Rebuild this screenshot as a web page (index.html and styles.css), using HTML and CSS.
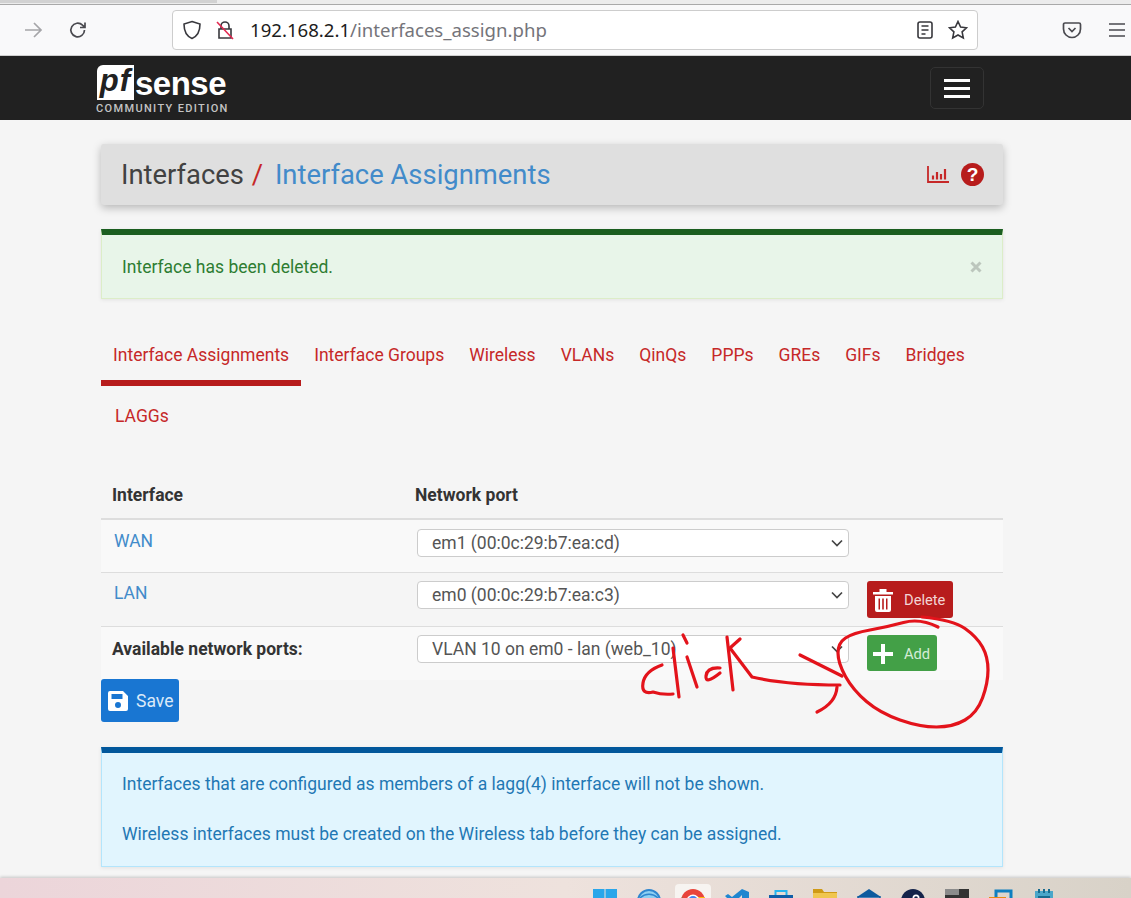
FILE: index.html
```html
<!DOCTYPE html>
<html>
<head>
    <meta charset="utf-8">
    <title>Interface Assignments</title>
    <link rel="stylesheet" href="styles.css">
</head>
<body>
    <div class="tabstrip"><div class="tabstrip-tab"></div></div>

    <div class="toolbar">
        <svg class="tool-icon back" viewBox="0 0 20 20"><path d="M2 10h16M11 3l7 7-7 7"/></svg>
        <svg class="tool-icon reload" viewBox="0 0 20 20"><path d="M16.5 10a6.8 6.8 0 1 1-2-4.8L17 7.500M17 2.500v5h-5"/></svg>
        <div class="urlbar">
            <svg class="url-icon" viewBox="0 0 20 20"><path d="M10 1.500l8 2.500c0 7-2 12-8 14.500C4 16 2 11 2 4z"/></svg>
            <svg class="url-icon lock" viewBox="0 0 20 20"><path d="M6 9V6a4 4 0 0 1 8 0v3M4 9h12v9H4z"/><path class="lock-strike" d="M2 2l16 17"/></svg>
            <div class="url"><span class="url-host">192.168.2.1</span>/interfaces_assign.php</div>
            <svg class="url-icon reader" viewBox="0 0 20 20"><rect x="3" y="2" width="14" height="16" rx="2"/><path d="M6.500 6h7M6.500 10h7M6.500 14h4"/></svg>
            <svg class="url-icon star" viewBox="0 0 20 20"><path d="M10 1.500l2.600 5.600 6 .7-4.500 4.100 1.200 6L10 15l-5.300 2.900 1.200-6-4.500-4.100 6-.7z"/></svg>
        </div>
        <svg class="tool-icon pocket" viewBox="0 0 20 20"><path d="M3 3h14a1.500 1.500 0 0 1 1.500 1.500V9a8.500 8.500 0 0 1-17 0V4.500A1.500 1.500 0 0 1 3 3z"/><path d="M6.500 8l3.500 3.500L13.500 8"/></svg>
        <svg class="tool-icon appmenu" viewBox="0 0 20 20"><path d="M2 4h16M2 10h16M2 16h16"/></svg>
    </div>

    <nav class="navbar">
        <div class="brand">
            <div class="brand-top">
                <div class="brand-pf">pf</div>
                <div class="brand-sense">sense</div>
            </div>
            <div class="brand-sub">COMMUNITY EDITION</div>
        </div>
        <button class="nav-toggle"><span></span><span></span><span></span></button>
    </nav>

    <main class="content">
        <header class="page-header">
            <h1 class="crumbs">
                <span>Interfaces</span>
                <span class="crumb-sep">/</span>
                <a class="crumb-link" href="#">Interface Assignments</a>
            </h1>
            <svg class="head-icon" viewBox="0 0 22 17"><path class="chart-line" d="M1 0v16h21"/><path class="chart-bars" d="M6 13.500v-4M10 13.500V6M14 13.500V8M18 13.500V3"/></svg>
            <svg class="head-icon help" viewBox="0 0 24 24"><circle cx="12" cy="12" r="12"/><text x="12" y="19" text-anchor="middle">?</text></svg>
        </header>

        <div class="alert alert-success">
            <span>Interface has been deleted.</span>
            <svg class="alert-close" viewBox="0 0 12 12"><path d="M1.500 1.500l9 9M10.500 1.500l-9 9"/></svg>
        </div>

        <ul class="tabs">
            <li class="tab active"><a href="#">Interface Assignments</a></li>
            <li class="tab"><a href="#">Interface Groups</a></li>
            <li class="tab"><a href="#">Wireless</a></li>
            <li class="tab"><a href="#">VLANs</a></li>
            <li class="tab"><a href="#">QinQs</a></li>
            <li class="tab"><a href="#">PPPs</a></li>
            <li class="tab"><a href="#">GREs</a></li>
            <li class="tab"><a href="#">GIFs</a></li>
            <li class="tab"><a href="#">Bridges</a></li>
            <li class="tab"><a href="#">LAGGs</a></li>
        </ul>

        <table class="assign-table">
            <colgroup>
                <col class="col-name">
                <col class="col-port">
                <col class="col-action">
            </colgroup>
            <thead>
                <tr>
                    <th>Interface</th>
                    <th>Network port</th>
                    <th></th>
                </tr>
            </thead>
            <tbody>
                <tr class="striped">
                    <td class="name-cell"><a href="#">WAN</a></td>
                    <td>
                        <div class="select-wrap">
                            <select><option>em1 (00:0c:29:b7:ea:cd)</option></select>
                            <svg class="chevron" viewBox="0 0 12 8"><path d="M1 1.500l5 5 5-5"/></svg>
                        </div>
                    </td>
                    <td></td>
                </tr>
                <tr>
                    <td class="name-cell"><a href="#">LAN</a></td>
                    <td>
                        <div class="select-wrap">
                            <select><option>em0 (00:0c:29:b7:ea:c3)</option></select>
                            <svg class="chevron" viewBox="0 0 12 8"><path d="M1 1.500l5 5 5-5"/></svg>
                        </div>
                    </td>
                    <td>
                        <button class="btn btn-delete">
                            <svg class="btn-icon" viewBox="0 0 20 24"><path d="M0 4h20v2.500H0zM6.500 4V1h7v3" class="fill"/><path class="fill" fill-rule="evenodd" d="M2 8h16v14a2 2 0 0 1-2 2H4a2 2 0 0 1-2-2zM5.500 10.500v11h1.500v-11zM9.200 10.500v11h1.600v-11zM13 10.500v11h1.500v-11z"/></svg>
                            Delete
                        </button>
                    </td>
                </tr>
                <tr class="striped">
                    <td class="name-cell"><strong>Available network ports:</strong></td>
                    <td>
                        <div class="select-wrap">
                            <select><option>VLAN 10 on em0 - lan (web_10)</option></select>
                            <svg class="chevron" viewBox="0 0 12 8"><path d="M1 1.500l5 5 5-5"/></svg>
                        </div>
                    </td>
                    <td>
                        <button class="btn btn-add">
                            <svg class="btn-icon" viewBox="0 0 20 20"><path class="fill" d="M8 0h4v8h8v4h-8v8H8v-8H0V8h8z"/></svg>
                            Add
                        </button>
                    </td>
                </tr>
            </tbody>
        </table>

        <button class="btn btn-save">
            <svg class="btn-icon" viewBox="0 0 20 20"><path class="fill" fill-rule="evenodd" d="M2 0h13l5 5v13a2 2 0 0 1-2 2H2a2 2 0 0 1-2-2V2a2 2 0 0 1 2-2zM3.500 3v5h11V3zM10 11a3 3 0 1 0 0 6 3 3 0 0 0 0-6z"/></svg>
            Save
        </button>

        <div class="alert alert-info">
            <p>Interfaces that are configured as members of a lagg(4) interface will not be shown.</p>
            <p>Wireless interfaces must be created on the Wireless tab before they can be assigned.</p>
        </div>
    </main>

    <div class="taskbar">
        <svg class="task-icon" viewBox="0 0 24 24"><path fill="#2aa6ea" d="M0 0h11.500v11.500H0zM12.500 0H24v11.500H12.500zM0 12.500h11.500V24H0zM12.500 12.500H24V24H12.500z"/></svg>
        <svg class="task-icon" viewBox="0 0 24 24"><circle cx="12" cy="12" r="11" fill="#8fd0f2" stroke="#2f86cf" stroke-width="2"/><path d="M3 9c5-5 13-5 18 0" fill="none" stroke="#2f86cf" stroke-width="1.500"/></svg>
        <div class="task-active">
            <svg class="task-icon" viewBox="0 0 24 24"><circle cx="12" cy="12" r="12" fill="#e8453c"/><path d="M1 8a12 12 0 0 0 11 16z" fill="#34a853"/><path d="M23.500 8H12l-2 16a12 12 0 0 0 13.500-16z" fill="#fbbc05"/><circle cx="12" cy="12" r="6.500" fill="#fff"/><circle cx="12" cy="12" r="5" fill="#4285f4"/></svg>
        </div>
        <svg class="task-icon" viewBox="0 0 24 24"><path fill="#1f86d0" d="M17 0l7 3v18l-7 3L7 14l-4 3-3-2 5-3-5-5 3-2 4 3zM17 6l-6 6 6 6z"/></svg>
        <svg class="task-icon" viewBox="0 0 24 24"><path fill="none" stroke="#26b4ee" stroke-width="2" d="M6.500 6V2h11v4"/><path fill="#0f5ea8" d="M0 6h24v18H0z"/></svg>
        <svg class="task-icon" viewBox="0 0 24 24"><path fill="#cf9a16" d="M0 0h9l2 3h13v6H0z"/><path fill="#f0c64f" d="M0 4h24v20H0z"/></svg>
        <svg class="task-icon" viewBox="0 0 24 24"><path fill="#0d5a9e" d="M12 0l12 8H0z"/><path fill="#fff" stroke="#0d5a9e" stroke-width="1.500" d="M1 8h22v16H1z"/></svg>
        <svg class="task-icon" viewBox="0 0 24 24"><circle cx="12" cy="12" r="12" fill="#14234a"/><circle cx="15" cy="9" r="3.500" fill="#fff"/><circle cx="15" cy="9" r="1.800" fill="#14234a"/></svg>
        <svg class="task-icon" viewBox="0 0 24 24"><path fill="#8b8b8b" d="M0 0h24v6H0z"/><path fill="#333" d="M14 0h10v6H14zM0 6h24v18H0z"/></svg>
        <svg class="task-icon" viewBox="0 0 24 24"><path fill="none" stroke="#0f7fc0" stroke-width="3" d="M7 8V2h15v15h-6"/><path fill="#e88a14" d="M0 8h17v16H0z"/></svg>
        <svg class="task-icon" viewBox="0 0 24 24"><path fill="#4aa6c9" d="M2 2h18v22H2z"/><path stroke="#176b8f" stroke-width="2" d="M6 0v4M11 0v4M16 0v4M5 8h12"/></svg>
    </div>

    <!-- red marker scribble drawn on top of the screenshot -->
    <svg class="scribble" viewBox="0 0 1131 898">
        <path d="M662 665Q645 671 643 683T653 692Q662 695 673 694"/>
        <path d="M673 648L679 697"/>
        <path d="M687 657L697 687"/>
        <path d="M683 635L687 643"/>
        <path d="M720 668Q707 667 706 676T720 673"/>
        <path d="M727 637L733 690"/>
        <path d="M740 639L730 648L752 677Q787 685 840 685"/>
        <path d="M800 655L842 676"/>
        <path d="M837 687Q836 703 817 712"/>
        <path d="M938 627Q920 618 903.500 622.500Q887 627 870 630Q853 633 845.500 638Q838 643 838 653Q838 663 845.500 676.500Q853 690 866.500 701.500Q880 713 900 720Q920 727 936.500 727Q953 727 965 720Q977 713 982.500 698Q988 683 988 670Q988 657 982.500 647Q977 637 965 628.500Q953 620 922 617"/>
    </svg>
</body>
</html>
```

FILE: styles.css
```css
* {
    box-sizing: border-box;
}

html, body {
    height: 100%;
}

body {
    position: relative;
    display: flex;
    flex-direction: column;
    margin: 0;
    overflow: hidden;
    font-family: "Roboto", "Liberation Sans", sans-serif;
    font-size: 17.500px;
    color: #333;
    background-color: #f5f5f5;
}

a {
    color: inherit;
    text-decoration: none;
}

/* browser chrome */
.tabstrip {
    flex: none;
    height: 5px;
    background-color: #ececec;
    border-bottom: 1px solid #a9a9a9;
}

.tabstrip-tab {
    width: 217px;
    height: 3px;
    background-color: #d2d2d2;
}

.toolbar {
    flex: none;
    display: flex;
    align-items: center;
    height: 51px;
    padding-left: 23px;
    background-color: #f9f9fa;
    border-bottom: 1px solid #cfcfcf;
}

.tool-icon {
    flex: none;
    width: 20px;
    height: 20px;
    fill: none;
    stroke: #4a4a4f;
    stroke-width: 1.700;
}

.back {
    stroke: #a5a5a8;
}

.reload {
    margin-left: 25px;
}

.pocket {
    margin-left: 84px;
}

.appmenu {
    margin-left: 25px;
}

.urlbar {
    flex: none;
    display: flex;
    align-items: center;
    width: 806px;
    height: 40px;
    margin-left: 84px;
    padding: 0 9px;
    background-color: #fff;
    border: 1px solid #cdcdcd;
    border-radius: 4px;
}

.url-icon {
    flex: none;
    width: 20px;
    height: 20px;
    fill: none;
    stroke: #38383d;
    stroke-width: 1.600;
}

.lock {
    margin-left: 13px;
}

.lock-strike {
    stroke: #e22850;
}

.url {
    flex: 1;
    margin: 0 0 2px 15px;
    font-family: "Noto Sans", sans-serif;
    font-size: 18.600px;
    color: #74747a;
}

.url-host {
    color: #1c1c20;
}

.reader {
    margin-right: 13px;
}

/* pfsense navbar */
.navbar {
    flex: none;
    display: flex;
    align-items: center;
    height: 64px;
    padding-left: 96px;
    background-color: #212121;
}

.brand {
    width: 834px;
    padding-top: 3px;
    color: #fff;
}

.brand-top {
    display: flex;
    align-items: center;
    height: 35px;
}

.brand-pf {
    width: 37px;
    height: 35px;
    margin-left: 1px;
    font-family: "Liberation Sans", sans-serif;
    font-size: 31px;
    font-weight: 700;
    font-style: italic;
    line-height: 31px;
    letter-spacing: 1px;
    text-align: center;
    color: #212121;
    background-color: #fff;
    border-radius: 6px 0 0 0;
}

.brand-sense {
    margin: 4px 0 0 1px;
    font-family: "Liberation Sans", sans-serif;
    font-size: 33px;
    font-weight: 700;
    letter-spacing: -.5px;
}

.brand-sub {
    margin-top: 2px;
    font-size: 11px;
    font-weight: 500;
    letter-spacing: 1.350px;
    color: #c4c4c4;
}

.nav-toggle {
    flex: none;
    display: flex;
    flex-direction: column;
    justify-content: center;
    gap: 5px;
    width: 54px;
    height: 42px;
    padding: 0 13px;
    background: none;
    border: 1px solid #333;
    border-radius: 5px;
}

.nav-toggle span {
    display: block;
    height: 3px;
    background-color: #fff;
}

/* page */
.content {
    flex: 1;
    width: 902px;
    margin-left: 101px;
    padding-top: 24px;
}

.page-header {
    display: flex;
    align-items: center;
    height: 61px;
    padding: 0 19px 0 20px;
    background-color: #dfdfdf;
    border-radius: 3px;
    box-shadow: 0 3px 8px rgba(0, 0, 0, .25);
}

.crumbs {
    flex: 1;
    margin: 0;
    font-size: 27.400px;
    font-weight: 400;
    color: #424242;
}

.crumb-sep {
    margin: 0 5px 0 1px;
    color: #c62828;
}

.crumb-link {
    color: #428bca;
}

.head-icon {
    flex: none;
    width: 22px;
    height: 17px;
    fill: none;
    stroke: #c62828;
}

.chart-line {
    stroke-width: 1.800;
}

.chart-bars {
    stroke-width: 2.200;
}

.help {
    width: 23px;
    height: 23px;
    margin-left: 12px;
    stroke: none;
    fill: #b71c1c;
}

.help text {
    font-family: "Liberation Sans", sans-serif;
    font-size: 20px;
    font-weight: 700;
    fill: #fff;
}

.alert {
    border-style: solid;
    border-width: 6px 1px 1px;
}

.alert-success {
    display: flex;
    align-items: center;
    justify-content: space-between;
    height: 70px;
    margin-top: 24px;
    padding: 0 20px;
    color: #2e7d32;
    background-color: #e8f5e9;
    border-color: #1b5e20 #dcedc8 #dcedc8;
    box-shadow: 0 1px 4px rgba(0, 0, 0, .08);
}

.alert-close {
    flex: none;
    width: 12px;
    height: 12px;
    fill: none;
    stroke: #bcc6bd;
    stroke-width: 3;
}

.tabs {
    display: flex;
    flex-wrap: wrap;
    row-gap: 10px;
    margin: 36px 0 0 -.5px;
    padding: 0;
    list-style: none;
}

.tab {
    height: 51px;
    padding: 10px 12.500px 0;
    color: #c62828;
}

.tab:last-child {
    margin-left: 2px;
}

.tab.active {
    padding-right: 12px;
    margin-right: .5px;
    border-bottom: 6px solid #b71c1c;
}

.assign-table {
    width: 100%;
    margin-top: 24px;
    border-collapse: collapse;
    table-layout: fixed;
}

.col-name {
    width: 305px;
}

.col-port {
    width: 452px;
}

.assign-table th {
    height: 48px;
    padding: 0 9px;
    text-align: left;
    color: #333;
    border-bottom: 2px solid #ddd;
}

.assign-table th:first-child {
    padding-left: 11px;
}

.assign-table td {
    height: 54px;
    padding: 8px 0 0 9px;
    vertical-align: top;
    border-top: 1px solid #ddd;
}

.assign-table tbody tr:first-child td {
    height: 53px;
    padding-top: 9px;
    border-top: 0;
}

.assign-table .name-cell {
    padding: 10px 0 0 13px;
    color: #428bca;
}

.assign-table tbody tr:first-child .name-cell {
    padding-top: 11px;
}

.name-cell strong {
    display: block;
    margin: 2px 0 0 -2px;
    color: #333;
}

.striped {
    background-color: #f9f9f9;
}

.select-wrap {
    position: relative;
    width: 432px;
    margin-left: 2px;
}

.select-wrap select {
    display: block;
    width: 100%;
    height: 28px;
    padding: 0 14px;
    font-family: inherit;
    font-size: 17.500px;
    color: #555;
    background-color: #fff;
    border: 1px solid #ccc;
    border-radius: 4px;
    appearance: none;
}

.chevron {
    position: absolute;
    top: 10px;
    right: 6px;
    width: 12px;
    height: 8px;
    fill: none;
    stroke: #444;
    stroke-width: 1.700;
}

.btn {
    display: inline-flex;
    align-items: center;
    font-family: inherit;
    color: #fff;
    border: 0;
    border-radius: 3px;
}

.btn-icon {
    flex: none;
    width: 20px;
    height: 20px;
}

.btn-icon .fill {
    fill: #fff;
}

.btn-delete {
    gap: 11px;
    width: 86px;
    height: 37px;
    padding: 2px 6px 0;
    font-size: 14.700px;
    color: #f2d5d5;
    background-color: #b71c1c;
}

.btn-delete .btn-icon {
    height: 24px;
}

.btn-add {
    gap: 11px;
    width: 70px;
    height: 36px;
    padding: 2px 6px 0;
    font-size: 14.700px;
    color: #d5ecd6;
    background-color: #43a047;
}

.btn-save {
    display: flex;
    gap: 8px;
    width: 78px;
    height: 43px;
    margin-top: -1px;
    padding: 0 7px;
    font-size: 17.500px;
    color: #dbe9f8;
    background-color: #1976d2;
}

.alert-info {
    height: 120px;
    margin-top: 25px;
    padding: 21px 20px 0;
    line-height: 20px;
    color: #1f78b4;
    background-color: #e1f5fe;
    border-color: #01579b #b3e5fc #b3e5fc;
    box-shadow: 0 1px 4px rgba(0, 0, 0, .08);
}

.alert-info p {
    margin: 0 0 30px;
}

/* desktop taskbar peeking in at the bottom */
.taskbar {
    flex: none;
    display: flex;
    gap: 20px;
    height: 20px;
    padding-left: 593px;
    overflow: hidden;
    background: linear-gradient(90deg, #ecd5da, #eee2dd 50%, #d8d2c8);
    box-shadow: 0 -1px 3px rgba(0, 0, 0, .2);
}

.task-icon {
    flex: none;
    width: 24px;
    height: 24px;
    margin-top: 11px;
}

.task-active {
    flex: none;
    width: 36px;
    height: 30px;
    margin: 6px -6px 0;
    padding: 5px 6px 0;
    background-color: #f7f4f1;
    border-radius: 4px;
}

.task-active .task-icon {
    margin-top: 0;
}

.scribble {
    position: absolute;
    top: 0;
    left: 0;
    width: 1131px;
    height: 898px;
    pointer-events: none;
    fill: none;
    stroke: #e3131b;
    stroke-width: 3.200;
    stroke-linecap: round;
    stroke-linejoin: round;
}
```
